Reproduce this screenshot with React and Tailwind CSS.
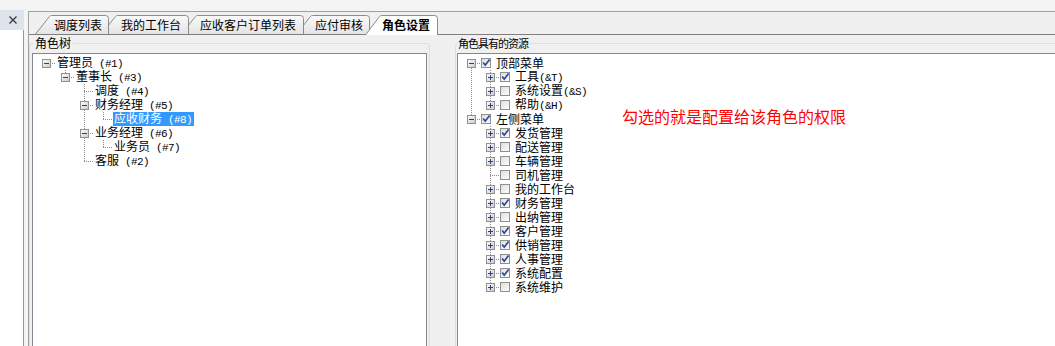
import React from "react";

const tabs = [
  { label: "调度列表", w: 74, className: "w-[74px] h-[19px] ml-[6px] pl-[19px] pt-[1px] z-[5]" },
  { label: "我的工作台", w: 88, className: "w-[88px] h-[19px] -ml-[8px] pl-[20px] pt-[1px] z-[4]" },
  { label: "应收客户订单列表", w: 123, className: "w-[123px] h-[19px] -ml-[8px] pl-[19px] pt-[1px] z-[3]" },
  { label: "应付审核", w: 74, className: "w-[74px] h-[19px] -ml-[8px] pl-[19px] pt-[1px] z-[2]" },
  { label: "角色设置", w: 73, active: true, className: "w-[73px] h-[20px] -ml-[5px] -mb-[1px] pl-[17px] z-[6] font-bold" },
];

const roles = [
  {
    label: "管理员",
    code: "(#1)",
    children: [
      {
        label: "董事长",
        code: "(#3)",
        children: [
          { label: "调度", code: "(#4)" },
          { label: "财务经理", code: "(#5)", children: [{ label: "应收财务", code: "(#8)", selected: true }] },
          { label: "业务经理", code: "(#6)", children: [{ label: "业务员", code: "(#7)" }] },
          { label: "客服", code: "(#2)" },
        ],
      },
    ],
  },
];

const resources = [
  {
    label: "顶部菜单",
    checked: true,
    children: [
      { label: "工具", code: "(&T)", checked: true, closed: true },
      { label: "系统设置", code: "(&S)", closed: true },
      { label: "帮助", code: "(&H)", closed: true },
    ],
  },
  {
    label: "左侧菜单",
    checked: true,
    children: [
      { label: "发货管理", checked: true, closed: true },
      { label: "配送管理", closed: true },
      { label: "车辆管理", closed: true },
      { label: "司机管理" },
      { label: "我的工作台", closed: true },
      { label: "财务管理", checked: true, closed: true },
      { label: "出纳管理", closed: true },
      { label: "客户管理", checked: true, closed: true },
      { label: "供销管理", checked: true, closed: true },
      { label: "人事管理", checked: true, closed: true },
      { label: "系统配置", checked: true, closed: true },
      { label: "系统维护", closed: true },
    ],
  },
];

// flatten a tree into rows; trail[k] = ancestor at depth k has a next sibling
const flatten = (nodes, depth = 0, trail = [], out = []) => {
  nodes.forEach((node, i) => {
    const last = i === nodes.length - 1;
    out.push({ node, depth, trail, first: depth === 0 && i === 0, last });
    if (node.children) flatten(node.children, depth + 1, [...trail, !last], out);
  });
  return out;
};

const Guide = ({ line }) => (
  <svg width="19" height="14" className="block shrink-0">
    {line && <path d="M9.5 0V14" stroke="#8c8c8c" strokeDasharray="1 1" />}
  </svg>
);

const Branch = ({ up, down, box }) => (
  <svg width="19" height="14" className="block shrink-0">
    <g stroke="#8c8c8c" strokeDasharray="1 1" fill="none">
      {up && <path d="M9.5 0V7" />}
      {down && <path d="M9.5 8V14" />}
      <path d="M9 7.5H19" />
    </g>
    {box && (
      <g>
        <rect x="5.5" y="3.5" width="8" height="8" fill="url(#expanderFill)" stroke="#919191" />
        <path d={box === "plus" ? "M7 7.5H12M9.5 5V10" : "M7 7.5H12"} stroke="#24418f" />
      </g>
    )}
  </svg>
);

const Check = ({ on }) => (
  <svg width="10" height="10" className="block shrink-0">
    <rect x="0.5" y="0.5" width="9" height="9" fill="url(#checkFill)" stroke="#8e8f8f" />
    {on && <path d="M2.2 4.6L4.2 7.2L8.6 1.4" fill="none" stroke="#2c45a2" strokeWidth="1.7" />}
  </svg>
);

const Code = ({ children }) => (
  <span className="font-['Liberation_Mono',monospace] text-[11px] tracking-[-0.6px]">{children}</span>
);

const Tab = ({ tab }) => {
  const h = tab.active ? 20 : 19;
  const w = tab.w;
  const d = `M0.5 ${h} L14.5 1.5 Q15.3 0.5 16.5 0.5 H${w - 3.5} Q${w - 0.5} 0.5 ${w - 0.5} 3.5 V${h}`;
  return (
    <div className={`relative flex items-center shrink-0 ${tab.className}`}>
      <svg width={w} height={h} className="absolute left-0 top-0">
        <path d={d} fill={tab.active ? "#ffffff" : "url(#tabFill)"} stroke="#8b8b8b" />
      </svg>
      <span className="relative leading-[14px] whitespace-nowrap">{tab.label}</span>
    </div>
  );
};

const RoleTree = () => (
  <div className="flex flex-col">
    {flatten(roles).map(({ node, trail, first, last }, i) => (
      <div key={i} className="flex items-center h-[14px]">
        {trail.map((line, k) => (
          <Guide key={k} line={line} />
        ))}
        <Branch up={!first} down={!last} box={node.children ? "minus" : null} />
        <span
          className={
            node.selected
              ? "pl-[1px] pr-[2px] leading-[12px] bg-[#3399ff] text-white whitespace-nowrap"
              : "ml-[1px] leading-[14px] whitespace-nowrap"
          }
        >
          {node.label}
          <Code>{" " + node.code}</Code>
        </span>
      </div>
    ))}
  </div>
);

const ResourceTree = () => (
  <div className="flex flex-col">
    {flatten(resources).map(({ node, trail, first, last }, i) => (
      <div key={i} className="flex items-center h-[14px]">
        {trail.map((line, k) => (
          <Guide key={k} line={line} />
        ))}
        <Branch up={!first} down={!last} box={node.children ? "minus" : node.closed ? "plus" : null} />
        <Check on={node.checked} />
        <span className="ml-[5px] leading-[14px] whitespace-nowrap">
          {node.label}
          {node.code && <Code>{node.code}</Code>}
        </span>
      </div>
    ))}
  </div>
);

const App = () => {
  return (
    <div className="w-[1055px] h-[346px] overflow-hidden bg-[#f4f4f4] font-['Noto_Sans_CJK_SC',sans-serif] text-[12px] text-black">
      <svg width="0" height="0" className="block">
        <defs>
          <linearGradient id="tabFill" x1="0" y1="0" x2="0" y2="1">
            <stop offset="0" stopColor="#fafafa" />
            <stop offset="1" stopColor="#e4e4e4" />
          </linearGradient>
          <linearGradient id="expanderFill" x1="0" y1="0" x2="1" y2="1">
            <stop offset="0" stopColor="#ffffff" />
            <stop offset="1" stopColor="#c9c9c9" />
          </linearGradient>
          <linearGradient id="checkFill" x1="0" y1="0" x2="1" y2="1">
            <stop offset="0" stopColor="#dcdcd7" />
            <stop offset="1" stopColor="#ffffff" />
          </linearGradient>
        </defs>
      </svg>
      <div className="w-[1085px] h-[380px] flex">
        {/* left dock */}
        <div className="w-[24px] shrink-0 flex flex-col pt-[10px]">
          <div className="h-[20px] bg-[#dde4eb] flex items-center justify-center">
            <svg width="8" height="8" className="block ml-[1px]">
              <path d="M0.5 0.5L7.5 7.5M7.5 0.5L0.5 7.5" stroke="#3c3c3c" strokeWidth="1.4" />
            </svg>
          </div>
          <div className="flex-1 bg-white border-r border-[#9a9a9a]" />
        </div>

        {/* tab control */}
        <div className="ml-[4px] mt-[11px] flex-1 flex flex-col border-l border-t border-[#a0a0a0] bg-[#f0f0f0]">
          <div className="flex items-end h-[23px] border-b border-[#7f7f7f]">
            {tabs.map((tab) => (
              <Tab key={tab.label} tab={tab} />
            ))}
          </div>

          <div className="flex-1 flex">
            <fieldset className="mt-[1px] w-[401px] shrink-0 flex flex-col border border-[#d5dfe5] rounded-[3px] px-[2px] pt-[3px]">
              <legend className="ml-[1px] px-[2px] leading-[14px]">角色树</legend>
              <div className="flex-1 bg-white border border-[#828790] pl-[4px] pt-[2px]">
                <RoleTree />
              </div>
            </fieldset>

            <fieldset className="mt-[1px] ml-[25px] flex-1 flex flex-col border border-[#d5dfe5] rounded-[3px] pl-[1px] pt-[3px]">
              <legend className="px-[1px] text-[11px] tracking-[-1px] leading-[14px]">角色具有的资源</legend>
              <div className="flex-1 flex bg-white border border-[#828790]">
                <div className="w-[164px] shrink-0 pl-[4px] pt-[2px]">
                  <ResourceTree />
                </div>
                <div className="pt-[51px] text-[16px] leading-[22px] text-[#ff0000] whitespace-nowrap">
                  勾选的就是配置给该角色的权限
                </div>
              </div>
            </fieldset>
          </div>
        </div>
      </div>
    </div>
  );
};

export default App;
